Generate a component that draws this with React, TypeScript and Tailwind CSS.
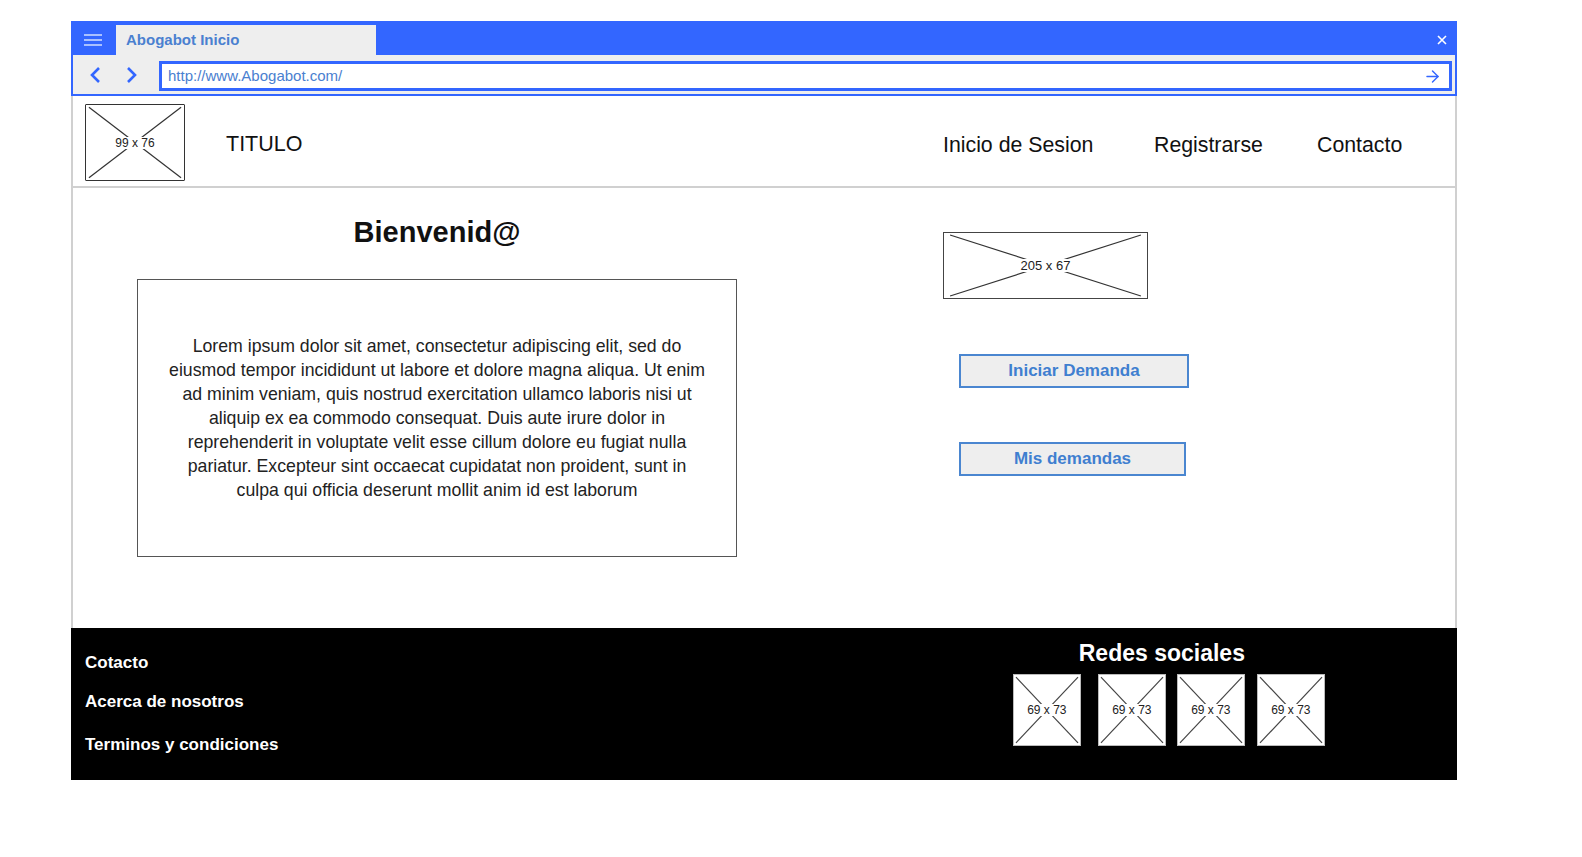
import React from 'react';
import { ArrowRight } from 'lucide-react';

function Placeholder({ label, className, line = '#333', labelClass = 'text-[12px]' }: { label: string; className: string; line?: string; labelClass?: string }) {
    return (
        <div className={`relative bg-white ${className}`}>
            <svg className="absolute inset-0 w-full h-full" viewBox="0 0 100 100" preserveAspectRatio="none">
                <line x1="3" y1="3" x2="97" y2="97" stroke={line} strokeWidth="1.2" vectorEffect="non-scaling-stroke" />
                <line x1="97" y1="3" x2="3" y2="97" stroke={line} strokeWidth="1.2" vectorEffect="non-scaling-stroke" />
            </svg>
            <div className="absolute inset-0 flex items-center justify-center">
                <span className={`bg-white px-[2px] leading-none text-[#222] ${labelClass}`}>{label}</span>
            </div>
        </div>
    );
}

export default function App() {
    const lorem = [
        'Lorem ipsum dolor sit amet, consectetur adipiscing elit, sed do',
        'eiusmod tempor incididunt ut labore et dolore magna aliqua. Ut enim',
        'ad minim veniam, quis nostrud exercitation ullamco laboris nisi ut',
        'aliquip ex ea commodo consequat. Duis aute irure dolor in',
        'reprehenderit in voluptate velit esse cillum dolore eu fugiat nulla',
        'pariatur. Excepteur sint occaecat cupidatat non proident, sunt in',
        'culpa qui officia deserunt mollit anim id est laborum',
    ];

    return (
        <div className="min-h-screen bg-white pt-[21px] pl-[71px] font-['Liberation_Sans',Arial,sans-serif]">
            <div className="w-[1386px]">
                {/* browser chrome */}
                <div className="border-2 border-[#3366ff] bg-[#eeeeee]">
                    <div className="h-[32px] bg-[#3366ff] flex items-start">
                        <div className="ml-[11px] mt-[11px] w-[18px] flex flex-col gap-[3px]">
                            <span className="h-[2px] bg-[#a9c0ff]"></span>
                            <span className="h-[2px] bg-[#a9c0ff]"></span>
                            <span className="h-[2px] bg-[#a9c0ff]"></span>
                        </div>
                        <div className="ml-[14px] mt-[2px] w-[260px] h-[30px] bg-[#eeeeee] flex items-center pl-[10px] text-[15px] font-bold text-[#4a80d0]">
                            Abogabot Inicio
                        </div>
                        <svg className="ml-auto mr-[8px] mt-[12px]" width="10" height="10" viewBox="0 0 10 10">
                            <path d="M1 1 L9 9 M9 1 L1 9" stroke="white" strokeWidth="1.6" fill="none" />
                        </svg>
                    </div>
                    <div className="h-[39px] flex items-start">
                        <svg className="ml-[16px] mt-[11px]" width="12" height="18" viewBox="0 0 12 18">
                            <polyline points="10,2 3,9 10,16" stroke="#3366ff" strokeWidth="2.6" fill="none" />
                        </svg>
                        <svg className="ml-[25px] mt-[11px]" width="12" height="18" viewBox="0 0 12 18">
                            <polyline points="2,2 9,9 2,16" stroke="#3366ff" strokeWidth="2.6" fill="none" />
                        </svg>
                        <div className="ml-[21px] mt-[6px] mr-[3px] flex-1 h-[30px] border-[3px] border-[#3366ff] bg-white flex items-center pl-[6px] pr-[7px]">
                            <span className="text-[15px] text-[#4a80d0]">http://www.Abogabot.com/</span>
                            <ArrowRight className="ml-auto text-[#3366ff]" size={19} strokeWidth={1.8} />
                        </div>
                    </div>
                </div>

                {/* header */}
                <div className="h-[92px] border-x-2 border-b-2 border-[#d0d0d0] flex items-start pl-[12px] pt-[8px]">
                    <Placeholder label="99 x 76" className="w-[100px] h-[77px] border-[1.5px] border-[#333] rounded-[1px]" />
                    <div className="ml-[41px] mt-[27px] text-[21.5px] text-[#111] leading-[26px]">TITULO</div>
                    <div className="ml-auto mr-[56px] mt-[28px] flex text-[21.3px] text-[#111] leading-[26px]">
                        <span className="w-[211px]">Inicio de Sesion</span>
                        <span className="w-[163px]">Registrarse</span>
                        <span className="w-[82px]">Contacto</span>
                    </div>
                </div>

                {/* main */}
                <div className="h-[440px] border-x-2 border-[#d0d0d0] flex">
                    <div className="w-[728px] flex flex-col items-center pt-[27px]">
                        <h1 className="text-[29px] font-bold leading-[34px] text-[#111]">Bienvenid@</h1>
                        <div className="mt-[30px] w-[600px] h-[278px] border-[1.5px] border-[#555] flex items-center justify-center">
                            <p className="text-center text-[17.7px] leading-[24px] text-[#222]">
                                {lorem.map((l, i) => (
                                    <React.Fragment key={i}>
                                        {l}
                                        {i < lorem.length - 1 && <br />}
                                    </React.Fragment>
                                ))}
                            </p>
                        </div>
                    </div>
                    <div className="ml-[142px] pt-[44px] flex flex-col items-start">
                        <Placeholder label="205 x 67" className="w-[205px] h-[67px] border-[1.5px] border-[#444]" labelClass="text-[13px]" />
                        <button className="ml-[16px] mt-[55px] w-[230px] h-[34px] bg-[#eeeeee] border-2 border-[#4a86d0] text-[17px] font-bold text-[#3f7fd0]">
                            Iniciar Demanda
                        </button>
                        <button className="ml-[16px] mt-[54px] w-[227px] h-[34px] bg-[#eeeeee] border-2 border-[#4a86d0] text-[17px] font-bold text-[#3f7fd0]">
                            Mis demandas
                        </button>
                    </div>
                </div>

                {/* footer */}
                <div className="h-[152px] bg-black flex text-white">
                    <div className="pl-[14px] pt-[25px] flex flex-col text-[17px] font-bold leading-[20px]">
                        <span>Cotacto</span>
                        <span className="mt-[19px]">Acerca de nosotros</span>
                        <span className="mt-[23px]">Terminos y condiciones</span>
                    </div>
                    <div className="ml-[735px] pt-[12px] flex flex-col items-center w-[311px]">
                        <div className="text-[23px] font-bold leading-[27px] -ml-[14px]">Redes sociales</div>
                        <div className="mt-[7px] flex">
                            <Placeholder label="69 x 73" className="w-[68px] h-[72px] border border-[#bbb]" line="#444" />
                            <Placeholder label="69 x 73" className="ml-[17px] w-[68px] h-[72px] border border-[#bbb]" line="#444" />
                            <Placeholder label="69 x 73" className="ml-[11px] w-[68px] h-[72px] border border-[#bbb]" line="#444" />
                            <Placeholder label="69 x 73" className="ml-[12px] w-[68px] h-[72px] border border-[#bbb]" line="#444" />
                        </div>
                    </div>
                </div>
            </div>
        </div>
    );
}
